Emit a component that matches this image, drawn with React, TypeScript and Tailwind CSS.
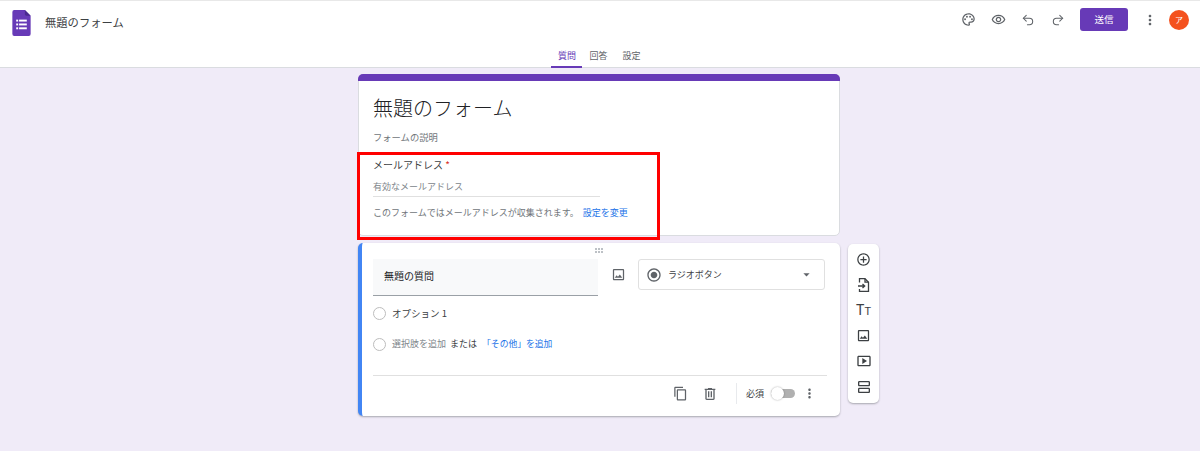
import React from "react";
import {
  MdOutlinePalette,
  MdOutlineRemoveRedEye,
  MdMoreVert,
  MdOutlineImage,
  MdAddCircleOutline,
  MdOutlineContentCopy,
  MdOutlineSmartDisplay,
  MdOutlineViewAgenda,
  MdRadioButtonChecked,
  MdArrowDropDown,
} from "react-icons/md";
import { Undo2, Redo2 } from "lucide-react";

const font = "font-['Noto_Sans_CJK_JP','Noto_Sans',sans-serif]";

function FormsLogo() {
  return (
    <svg width="19" height="26" viewBox="0 0 19 27">
      <path d="M2 0h11l6 6v19a2 2 0 0 1-2 2H2a2 2 0 0 1-2-2V2a2 2 0 0 1 2-2z" fill="#673ab7" />
      <path d="M13 0l6 6h-4.500a1.500 1.500 0 0 1-1.500-1.500z" fill="#4a2a8f" />
      <g fill="#fff">
        <rect x="4" y="10" width="2" height="2" />
        <rect x="7" y="10" width="8" height="2" />
        <rect x="4" y="14" width="2" height="2" />
        <rect x="7" y="14" width="8" height="2" />
        <rect x="4" y="18" width="2" height="2" />
        <rect x="7" y="18" width="8" height="2" />
      </g>
    </svg>
  );
}

function ImportIcon() {
  return (
    <svg width="15" height="16" viewBox="0 0 15 16" fill="none" stroke="#3c4043" strokeWidth="1.300">
      <path d="M3.500 5.500V1.700h5.500l3.500 3.500v9.100h-9V12" />
      <path d="M9 1.700v3.500h3.500" />
      <path d="M2 9h6.500M6.500 7l2.200 2-2.200 2" />
    </svg>
  );
}

function TrashIcon() {
  return (
    <svg width="16" height="16" viewBox="0 0 24 24" fill="currentColor">
      <path d="M7 21q-.825 0-1.412-.587Q5 19.825 5 19V6H4V4h5V3h6v1h5v2h-1v13q0 .825-.587 1.413Q17.825 21 17 21ZM17 6H7v13h10ZM9 17h2V8H9Zm4 0h2V8h-2Z" />
    </svg>
  );
}

function Header() {
  return (
    <header className="h-[68px] bg-white border-t border-t-[#e8e8e8] border-b border-b-[#dadce0]">
      <div className="h-[43px] flex items-center pl-3 pr-[11px]">
        <FormsLogo />
        <span className="ml-[14px] text-[11.300px] text-[#3c4043]">無題のフォーム</span>
        <div className="ml-auto -mt-[6px] flex items-center text-[#5f6368]">
          <MdOutlinePalette size={15} className="mr-[15px]" />
          <MdOutlineRemoveRedEye size={15} className="mr-[15px]" />
          <Undo2 size={14} strokeWidth={1.800} className="mr-[16px]" />
          <Redo2 size={14} strokeWidth={1.800} className="mr-[15px]" />
          <button className="w-[48px] h-[23px] rounded-[3px] bg-[#673ab7] text-white text-[9.500px] mr-[14px]">送信</button>
          <MdMoreVert size={16} className="mr-[11px]" />
          <div className="w-5 h-5 rounded-full bg-[#f4511e] text-white text-[8px] flex items-center justify-center">ア</div>
        </div>
      </div>
      <nav className="flex justify-center text-[9px] text-[#5f6368] pr-[8px]">
        <div className="w-[31px] h-[24px] flex flex-col items-center justify-between text-[#673ab7]">
          <span className="mt-[5px]">質問</span>
          <div className="h-[2px] w-full bg-[#673ab7]" />
        </div>
        <span className="ml-[7px] mt-[5px]">回答</span>
        <span className="ml-[15px] mt-[5px]">設定</span>
      </nav>
    </header>
  );
}

function EmailCard() {
  return (
    <section className="relative h-[162px] bg-white rounded-[5px] border border-[#dadce0] overflow-visible">
      <div className="h-[7px] -mx-px -mt-px bg-[#673ab7] rounded-t-[5px]" />
      <div className="pl-[14px]">
        <h1 className="text-[20px] font-light leading-[30px] mt-[12px] text-[#202124]">無題のフォーム</h1>
        <p className="text-[9.300px] text-[#70757a] mt-[7px] leading-[14px]">フォームの説明</p>
        <p className="text-[10px] leading-[16px] text-[#3c4043] mt-[13px]">
          メールアドレス <span className="text-[#d93025]">*</span>
        </p>
        <div className="w-[227px] h-[17px] mt-[7px] border-b border-[#e0e0e0] text-[9px] leading-[14px] text-[#80868b]">
          有効なメールアドレス
        </div>
        <p className="mt-[9px] text-[9px] leading-[14px] text-[#70757a]">
          このフォームではメールアドレスが収集されます。
          <span className="ml-[4px] text-[#1a73e8]">設定を変更</span>
        </p>
      </div>
      {/* annotation */}
      <div className="absolute left-[-2px] top-[77px] w-[303px] h-[88px] border-[3px] border-[#ff0000]" />
    </section>
  );
}

function QuestionCard() {
  return (
    <section className="relative h-[173px] bg-white rounded-[5px] border-l-[4px] border-l-[#4285f4] shadow-[0_1px_2px_rgba(60,64,67,0.4)] pl-[11px] pr-[15px]">
      <div className="absolute top-[5px] left-[233px] grid grid-cols-3 gap-[1px]">
        {[0, 1, 2, 3, 4, 5].map((i) => (
          <span key={i} className="w-[2px] h-[2px] bg-[#bdc1c6]" />
        ))}
      </div>
      <div className="flex pt-[16px]">
        <div className="w-[225px] h-[37px] bg-[#f8f9fa] border-b border-[#9aa0a6] pl-[11px] pb-[3px] flex items-center text-[10px] text-[#202124]">
          無題の質問
        </div>
        <div className="w-[40px] h-[31px] flex items-center justify-center text-[#5f6368]">
          <MdOutlineImage size={15} />
        </div>
        <div className="w-[187px] h-[31px] border border-[#e0e0e0] rounded-[3px] flex items-center pl-[7px] pr-[10px] text-[9px] text-[#3c4043]">
          <MdRadioButtonChecked size={16} className="text-[#5f6368]" />
          <span className="ml-[6px]">ラジオボタン</span>
          <MdArrowDropDown size={15} className="ml-auto text-[#5f6368]" />
        </div>
      </div>
      <div className="mt-[9px] flex items-center h-[16px] text-[9.500px] text-[#3c4043]">
        <span className="w-[13px] h-[13px] rounded-full border border-[#bdbdbd]" />
        <span className="ml-[6px]">オプション 1</span>
      </div>
      <div className="mt-[15px] flex items-center h-[16px] text-[9px]">
        <span className="w-[13px] h-[13px] rounded-full border border-[#bdbdbd]" />
        <span className="ml-[6px] text-[#80868b]">選択肢を追加</span>
        <span className="ml-[4px] text-[#3c4043]">または</span>
        <span className="ml-[5px] text-[#1a73e8] text-[8.800px]">「その他」を追加</span>
      </div>
      <div className="mt-[23px] border-t border-[#e0e0e0] h-[36px] flex items-center justify-end text-[#5f6368] -mr-[2px]">
        <MdOutlineContentCopy size={15} className="mr-[14px]" />
        <TrashIcon />
        <div className="w-px h-[21px] bg-[#e8eaed] ml-[18px]" />
        <span className="ml-[9px] text-[9px] text-[#3c4043]">必須</span>
        <div className="relative ml-[7px] w-[24px] h-[9px] rounded-full bg-[#b0b0b0]">
          <span className="absolute left-0 top-[-2px] w-[13px] h-[13px] rounded-full bg-white shadow-[0_0_2px_rgba(0,0,0,0.35)]" />
        </div>
        <MdMoreVert size={15} className="ml-[7px] mr-[10px]" />
      </div>
    </section>
  );
}

function SideBar() {
  return (
    <aside className="w-[31px] h-[159px] mt-[170px] bg-white rounded-[5px] shadow-[0_1px_2px_rgba(60,64,67,0.4)] flex flex-col items-center justify-between py-[8px] text-[#3c4043]">
      <MdAddCircleOutline size={15} />
      <ImportIcon />
      <span className="font-['Roboto'] text-[14px] leading-[15px]">
        T<span className="text-[11px]">T</span>
      </span>
      <MdOutlineImage size={15} />
      <MdOutlineSmartDisplay size={16} />
      <MdOutlineViewAgenda size={16} />
    </aside>
  );
}

export default function App() {
  return (
    <div className={`${font} w-[1200px] h-[451px] overflow-hidden bg-[#f0ebf8]`}>
      <Header />
      <main className="flex gap-[8px] pl-[358px] pt-[6px]">
        <div className="w-[482px] flex flex-col gap-[7px]">
          <EmailCard />
          <QuestionCard />
        </div>
        <SideBar />
      </main>
    </div>
  );
}
